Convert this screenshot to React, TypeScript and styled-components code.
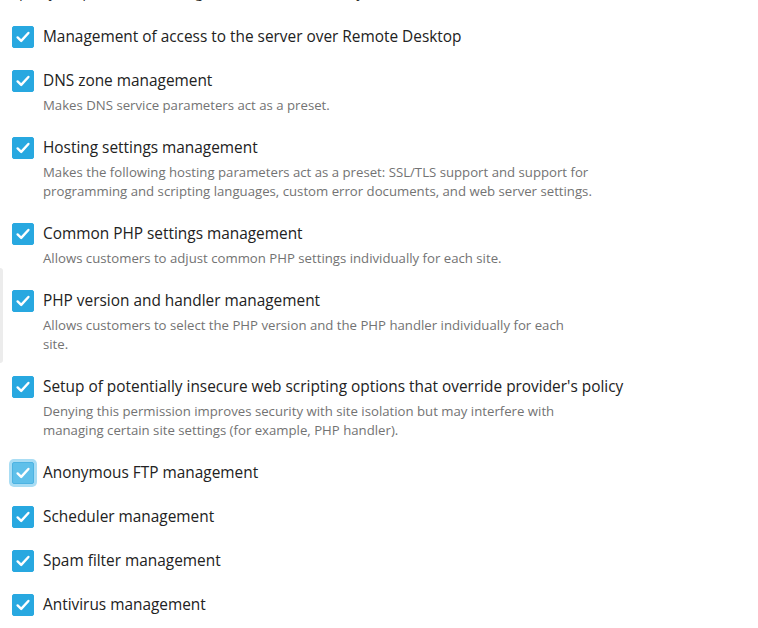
import React from "react";
import styled, { createGlobalStyle } from "styled-components";

const Global = createGlobalStyle`
  html, body { margin: 0; padding: 0; background: #fff; }
  body { font-family: "Open Sans", "Noto Sans", sans-serif; overflow: hidden; }
`;

const Page = styled.div`
  position: relative;
  width: 758px;
  height: 628px;
  overflow: hidden;
  background: #fff;
`;

const Intro = styled.p`
  margin: -16px 0 0 12px;
  font-size: 13.2px;
  line-height: 18px;
  color: #222;
`;

const List = styled.div`
  display: flex;
  flex-direction: column;
  gap: 22px;
  padding: 24px 0 0 12px;
`;

const Row = styled.div`
  display: grid;
  grid-template-columns: 22px 1fr;
  column-gap: 9px;
`;

const Box = styled.span<{ $focused?: boolean }>`
  box-sizing: border-box;
  width: 22px;
  height: 22px;
  border-radius: 2px;
  background: ${(p) => (p.$focused ? "#5fc0ea" : "#28a8e0")};
  border: 1px solid ${(p) => (p.$focused ? "#4db3e2" : "#28a8e0")};
  box-shadow: ${(p) => (p.$focused ? "0 0 0 3px #a9ddf4" : "none")};
  display: flex;
  align-items: center;
  justify-content: center;
`;

const Label = styled.span`
  font-size: 15.4px;
  line-height: 22px;
  color: #222;
`;

const Desc = styled.div`
  grid-column: 2;
  margin-top: 4px;
  max-width: 570px;
  font-size: 13.2px;
  line-height: 19px;
  color: #737373;
  white-space: pre-line;
`;

const ScrollHint = styled.div`
  position: absolute;
  left: 0;
  top: 268px;
  width: 3px;
  height: 95px;
  background: #ececec;
  border-radius: 0 3px 3px 0;
`;

const Check = () => (
  <svg width="16" height="16" viewBox="0 0 16 16" fill="none">
    <path d="M2.6 8.4 L6.2 11.9 L13.4 4" stroke="#fff" strokeWidth="2.4" strokeLinecap="round" strokeLinejoin="round" />
  </svg>
);

type Item = { label: string; desc?: string; focused?: boolean };

const items: Item[] = [
  { label: "Management of access to the server over Remote Desktop" },
  { label: "DNS zone management", desc: "Makes DNS service parameters act as a preset." },
  {
    label: "Hosting settings management",
    desc: "Makes the following hosting parameters act as a preset: SSL/TLS support and support for\nprogramming and scripting languages, custom error documents, and web server settings.",
  },
  {
    label: "Common PHP settings management",
    desc: "Allows customers to adjust common PHP settings individually for each site.",
  },
  {
    label: "PHP version and handler management",
    desc: "Allows customers to select the PHP version and the PHP handler individually for each\nsite.",
  },
  {
    label: "Setup of potentially insecure web scripting options that override provider's policy",
    desc: "Denying this permission improves security with site isolation but may interfere with\nmanaging certain site settings (for example, PHP handler).",
  },
  { label: "Anonymous FTP management", focused: true },
  { label: "Scheduler management" },
  { label: "Spam filter management" },
  { label: "Antivirus management" },
];

export default function App() {
  return (
    <Page>
      <Global />
      <Intro>Specify the permissions to be granted to the customer by default.</Intro>
      <List>
        {items.map((it) => (
          <Row key={it.label}>
            <Box $focused={it.focused}>
              <Check />
            </Box>
            <Label>{it.label}</Label>
            {it.desc && <Desc>{it.desc}</Desc>}
          </Row>
        ))}
      </List>
      <ScrollHint />
    </Page>
  );
}
